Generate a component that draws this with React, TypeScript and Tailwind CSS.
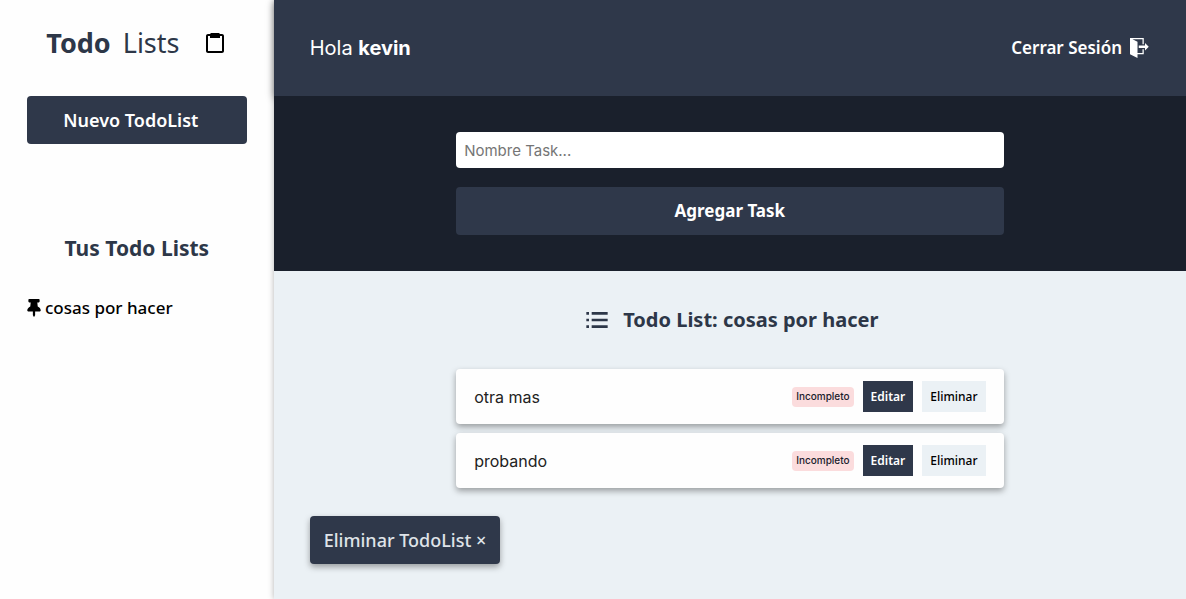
import { useState } from 'react';
import { BiClipboard, BiListUl } from 'react-icons/bi';
import { ImExit } from 'react-icons/im';
import { FaThumbtack } from 'react-icons/fa';

type Task = {
  id: number;
  nombre: string;
  estado: boolean;
};

const listas = [{ id: 1, nombre: 'cosas por hacer' }];

const tareasIniciales: Task[] = [
  { id: 1, nombre: 'otra mas', estado: false },
  { id: 2, nombre: 'probando', estado: false },
];

function Sidebar() {
  return (
    <aside className="bg-[#fefefe] px-[27px] pt-[23px]">
      <h1 className="flex items-center justify-center text-[27px] leading-10 text-[#2d3748]">
        <span className="font-bold">Todo</span>
        <span className="ml-3">Lists</span>
        <BiClipboard className="ml-6 h-6 w-6 text-black" />
      </h1>

      <button type="button" className="mt-[33px] h-12 w-full rounded bg-[#2f384a] pr-3 text-[18px] font-semibold text-white">
        Nuevo TodoList
      </button>

      <h2 className="mt-[88px] text-center text-[21px] leading-8 font-bold text-[#2d3748]">Tus Todo Lists</h2>

      <ul className="mt-7">
        {listas.map((lista) => (
          <li key={lista.id}>
            <button type="button" className="flex items-center gap-1 text-[17px] leading-8 font-medium text-black">
              <FaThumbtack className="h-[18px] w-[14px]" />
              {lista.nombre}
            </button>
          </li>
        ))}
      </ul>
    </aside>
  );
}

function Barra() {
  return (
    <header className="flex h-24 items-center justify-between bg-[#2f384a] px-9 text-white shadow-[0_2px_8px_rgba(0,0,0,0.4)]">
      <p className="font-['Inter',sans-serif] text-[20px]">
        Hola <span className="font-bold">kevin</span>
      </p>
      <button type="button" className="flex items-center gap-2 text-[17px] font-semibold">
        Cerrar Sesión
        <ImExit className="h-5 w-5" />
      </button>
    </header>
  );
}

function FormTask({ onAgregar }: { onAgregar: (nombre: string) => void }) {
  const [nombre, setNombre] = useState('');

  function handleSubmit(e: React.FormEvent<HTMLFormElement>) {
    e.preventDefault();
    if (nombre.trim() === '') return;
    onAgregar(nombre);
    setNombre('');
  }

  return (
    <div className="relative bg-[#1a202c] py-9">
      <form onSubmit={handleSubmit} className="mx-auto flex w-3/5 flex-col gap-[19px]">
        <input
          type="text"
          name="nombre"
          aria-label="Nombre Task"
          placeholder="Nombre Task..."
          value={nombre}
          onChange={(e) => setNombre(e.target.value)}
          className="h-9 w-full rounded bg-white px-2 font-['Inter',sans-serif] text-[15px] text-gray-900 placeholder:text-[#757575]"
        />
        <button type="submit" className="h-12 w-full rounded bg-[#2f384a] text-[17px] font-bold text-white">
          Agregar Task
        </button>
      </form>
    </div>
  );
}

function TaskItem({ task, onEstado, onEliminar }: { task: Task; onEstado: () => void; onEliminar: () => void }) {
  return (
    <li className="flex items-center justify-between rounded bg-[#fefefe] px-[18px] py-3 shadow-[0_3px_6px_rgba(0,0,0,0.35)]">
      <p className="font-['Inter',sans-serif] text-[16px] text-[#222222]">{task.nombre}</p>
      <div className="flex items-center gap-[9px]">
        <button
          type="button"
          onClick={onEstado}
          className="h-5 rounded bg-[#fbdcdd] px-1 font-['Inter',sans-serif] text-[10px] font-medium text-[#1a202c]"
        >
          {task.estado ? 'Completo' : 'Incompleto'}
        </button>
        <button type="button" className="h-[31px] bg-[#2f384a] px-2 text-[12px] font-semibold text-white">
          Editar
        </button>
        <button type="button" onClick={onEliminar} className="h-[31px] bg-[#ebf1f5] px-2 text-[12px] font-medium text-black">
          Eliminar
        </button>
      </div>
    </li>
  );
}

export default function App() {
  const [tareas, setTareas] = useState<Task[]>(tareasIniciales);

  function agregarTask(nombre: string) {
    setTareas([...tareas, { id: Date.now(), nombre, estado: false }]);
  }

  return (
    <div className="grid min-h-screen grid-cols-[3fr_10fr] bg-[#fefefe] font-['Noto_Sans',sans-serif]">
      <Sidebar />

      <div className="flex flex-col bg-[#ebf1f5] shadow-[0_0_6px_rgba(0,0,0,0.3)]">
        <Barra />

        <main className="flex flex-1 flex-col">
          <FormTask onAgregar={agregarTask} />

          <section className="px-9 py-[33px]">
            <h2 className="flex items-center justify-center gap-[10px] text-[20px] leading-8 font-bold text-[#2d3748]">
              <BiListUl className="h-8 w-8" />
              Todo List: cosas por hacer
            </h2>
          </section>

          <ul className="mx-auto flex w-3/5 flex-col gap-[9px]">
            {tareas.map((task) => (
              <TaskItem
                key={task.id}
                task={task}
                onEstado={() => setTareas(tareas.map((t) => (t.id === task.id ? { ...t, estado: !t.estado } : t)))}
                onEliminar={() => setTareas(tareas.filter((t) => t.id !== task.id))}
              />
            ))}
          </ul>

          <div className="px-9 py-7">
            <button
              type="button"
              className="h-12 rounded bg-[#2f384a] px-[14px] text-[18px] font-medium text-[#dfe3e8] shadow-[0_3px_6px_rgba(0,0,0,0.35)]"
            >
              Eliminar TodoList &times;
            </button>
          </div>
        </main>
      </div>
    </div>
  );
}
